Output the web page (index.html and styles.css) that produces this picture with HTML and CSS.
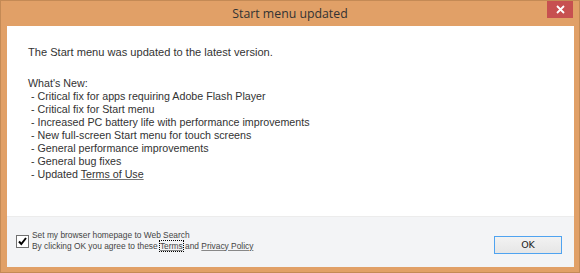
FILE: index.html
```html
<!DOCTYPE html>
<html lang="en">
<head>
<meta charset="UTF-8">
<title>Start menu updated</title>
<link rel="stylesheet" href="styles.css">
</head>
<body>
    <div class="window">
        <div class="titlebar">
            <span class="title">Start menu updated</span>
            <button class="close-button">
                <svg width="9" height="9" viewBox="0 0 9 9"><path d="M1 1L8 8M8 1L1 8" stroke="#fff" stroke-width="1.8"/></svg>
            </button>
        </div>
        <div class="client">
            <div class="content">
                <p class="intro">The Start menu was updated to the latest version.</p>
                <p class="news">What's New:<br>
                 &nbsp;- Critical fix for apps requiring Adobe Flash Player<br>
                 &nbsp;- Critical fix for Start menu<br>
                 &nbsp;- Increased PC battery life with performance improvements<br>
                 &nbsp;- New full-screen Start menu for touch screens<br>
                 &nbsp;- General performance improvements<br>
                 &nbsp;- General bug fixes<br>
                 &nbsp;- Updated <a href="#">Terms of Use</a></p>
            </div>
            <div class="footer">
                <label class="agree">
                    <span class="checkbox">
                        <svg width="11" height="11" viewBox="0 0 11 11"><path d="M2 5.5L4.3 8L9 2" fill="none" stroke="#000" stroke-width="2"/></svg>
                    </span>
                    <span class="agree-text">
                        Set my browser homepage to Web Search<br>
                        By clicking OK you agree to these <a href="#" class="focused">Terms</a> and <a href="#">Privacy Policy</a>
                    </span>
                </label>
                <button class="ok-button">OK</button>
            </div>
        </div>
    </div>
</body>
</html>
```

FILE: styles.css
```css
body {
    margin: 0;
    padding: 0;
    font-family: 'Liberation Sans', Arial, sans-serif;
}

.window {
    width: 580px;
    height: 273px;
    box-sizing: border-box;
    background-color: #e1a067;
    border: 1px solid #c48a55;
    display: flex;
    flex-direction: column;
}

.titlebar {
    height: 25px;
    display: flex;
    justify-content: center;
    align-items: center;
    position: relative;
}
.title {
    font-family: 'Open Sans', sans-serif;
    font-size: 12.3px;
    color: #333;
    margin-top: -1px;
}
.close-button {
    position: absolute;
    top: 0;
    right: 6px;
    width: 26px;
    height: 17px;
    border: none;
    padding: 0;
    background-color: #c75050;
    display: flex;
    justify-content: center;
    align-items: center;
}

.client {
    flex: 1;
    margin: 0 5px 5px 6px;
    background-color: #fff;
    display: flex;
    flex-direction: column;
}

.content {
    flex: 1;
    padding: 20px 21px 0 21px;
    font-size: 10.7px;
    line-height: 13px;
    color: #333;
}
.content p {
    margin: 0 0 18px 0;
}
.content .intro {
    font-size: 11.1px;
}
.content a {
    color: #333;
    text-decoration-color: #777;
}

.footer {
    height: 50px;
    background-color: #f3f4f6;
    border-top: 1px solid #ececec;
    display: flex;
    align-items: center;
    justify-content: space-between;
    padding: 0 12px 0 9px;
}

.agree {
    display: flex;
    align-items: center;
    gap: 3px;
    margin-top: -3px;
}
.checkbox {
    width: 11px;
    height: 11px;
    border: 1px solid #707070;
    background-color: #fff;
    display: flex;
    margin-top: 1px;
}
.agree-text {
    font-family: 'Liberation Sans', sans-serif;
    font-size: 8.4px;
    line-height: 11px;
    color: #444;
}
.agree-text a {
    color: #444;
    text-decoration-color: #888;
}
.focused {
    outline: 1px dotted #000;
}

.ok-button {
    width: 68px;
    height: 18px;
    margin-top: 5px;
    border: 1px solid #4fa3f0;
    background: linear-gradient(#f2f2f2, #e6e6e6);
    font-family: 'DejaVu Sans', sans-serif;
    font-size: 9.5px;
    color: #222;
    padding: 0;
}
```
